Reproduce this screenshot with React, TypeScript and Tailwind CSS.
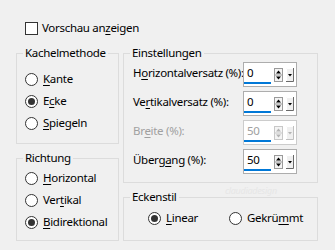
import React from 'react';

const U: React.FC<{ children: React.ReactNode }> = ({ children }) => (
  <span className="underline underline-offset-[2px] decoration-1">{children}</span>
);

const Radio: React.FC<{ checked?: boolean; children: React.ReactNode }> = ({ checked, children }) => (
  <div className="flex items-center h-[22px]">
    <span className="w-[13px] h-[13px] rounded-full border border-[#333] bg-white flex items-center justify-center shrink-0">
      {checked && <span className="w-[7px] h-[7px] rounded-full bg-[#333]" />}
    </span>
    <span className="ml-[5px] whitespace-nowrap">{children}</span>
  </div>
);

const Legend: React.FC<{ children: React.ReactNode }> = ({ children }) => (
  <div className="-mt-[9px] ml-[6px] px-[2px] w-fit bg-[#f0f0f0] leading-[16px] whitespace-nowrap">{children}</div>
);

const SpinBox: React.FC<{ value: string; disabled?: boolean }> = ({ value, disabled }) => {
  const ink = disabled ? '#b4b4b4' : '#000';
  const edge = disabled ? '#c8c8c8' : '#9a9a9a';
  return (
    <div className={`w-[54px] h-[25px] shrink-0 border bg-white flex items-center ${disabled ? 'border-[#cccccc]' : 'border-[#adadad]'}`}>
      <div className="w-[28px] h-full flex flex-col justify-end pb-[2px]">
        <span className={`pl-[3px] leading-[15px] ${disabled ? 'text-[#a0a0a0]' : 'text-black'}`}>{value}</span>
        <span className="mt-[2px] h-[2px] w-[27px] bg-[#0078d7]" />
      </div>
      <svg width="9" height="14" viewBox="0 0 9 14" className="ml-[2px]">
        <rect x="0.5" y="0.5" width="8" height="13" fill="#f4f4f4" stroke={edge} />
        <line x1="0" y1="7" x2="9" y2="7" stroke={edge} />
        <path d="M4.5 2.5 L7 5.5 L2 5.5 Z" fill={ink} />
        <path d="M2 8.5 L7 8.5 L4.5 11.5 Z" fill={ink} />
      </svg>
      <svg width="8" height="14" viewBox="0 0 8 14" className="ml-[3px]">
        <rect width="8" height="14" fill="#f0f0f0" />
        <path d="M0.5 13 V0.5 H7" stroke="#ffffff" fill="none" />
        <path d="M7.5 0 V13.5 H0" stroke={disabled ? '#c0c0c0' : '#6a6a6a'} fill="none" />
        <path d="M2 6 L6 6 L4 8.5 Z" fill={ink} />
      </svg>
    </div>
  );
};

const Row: React.FC<{ label: React.ReactNode; value: string; disabled?: boolean }> = ({ label, value, disabled }) => (
  <div className="flex items-center h-[25px]">
    <span className={`w-[119px] shrink-0 pl-[9px] whitespace-nowrap -mt-[3px] ${disabled ? 'text-[#a0a0a0]' : ''}`}>{label}</span>
    <SpinBox value={value} disabled={disabled} />
  </div>
);

export default function App() {
  return (
    <div
      className="relative w-[335px] h-[250px] bg-[#f0f0f0] text-black text-[11.5px] tracking-[-0.3px] pt-[20px] pl-[16px] overflow-hidden"
      style={{ fontFamily: '"Noto Sans", "Open Sans", sans-serif' }}
    >
      {/* Vorschau */}
      <div className="flex items-center h-[16px] ml-[9px]">
        <span className="w-[13px] h-[13px] border border-[#333] bg-white" />
        <span className="ml-[4px]">Vorschau an<U>z</U>eigen</span>
      </div>

      <div className="flex mt-[17px]">
        {/* left column */}
        <div className="w-[103px] flex flex-col">
          <div className="h-[91px] border border-[#dcdcdc]">
            <Legend>Kachelmethode</Legend>
            <div className="pl-[8px] mt-[7px]">
              <Radio><U>K</U>ante</Radio>
              <Radio checked>E<U>c</U>ke</Radio>
              <Radio><U>S</U>piegeln</Radio>
            </div>
          </div>
          <div className="h-[83px] mt-[14px] border border-[#dcdcdc]">
            <Legend>Richtung</Legend>
            <div className="pl-[8px] mt-[1px]">
              <Radio><U>H</U>orizontal</Radio>
              <Radio>Ver<U>t</U>ikal</Radio>
              <Radio checked><U>B</U>idirektional</Radio>
            </div>
          </div>
        </div>

        {/* right column */}
        <div className="w-[195px] ml-[4px] flex flex-col">
          <div className="h-[130px] border border-[#dcdcdc]">
            <Legend>Einstellungen</Legend>
            <div className="mt-[1px] flex flex-col gap-[4px]">
              <Row label={<>H<U>o</U>rizontalversatz (%):</>} value="0" />
              <Row label={<>Ve<U>r</U>tikalversatz (%):</>} value="0" />
              <Row label={<>Br<U>e</U>ite (%):</>} value="50" disabled />
              <Row label={<>Überg<U>a</U>ng (%):</>} value="50" />
            </div>
          </div>
          <div className="h-[44px] mt-[14px] border border-[#dcdcdc]">
            <Legend>Eckenstil</Legend>
            <div className="flex pl-[24px] mt-[2px]">
              <div className="w-[81px]">
                <Radio checked><U>L</U>inear</Radio>
              </div>
              <Radio>Gekrü<U>m</U>mt</Radio>
            </div>
          </div>
        </div>
      </div>

      {/* watermark */}
      <span className="absolute left-[225px] top-[184px] text-[9px] italic text-[#e6e6e6] pointer-events-none">claudiadesign</span>
    </div>
  );
}
